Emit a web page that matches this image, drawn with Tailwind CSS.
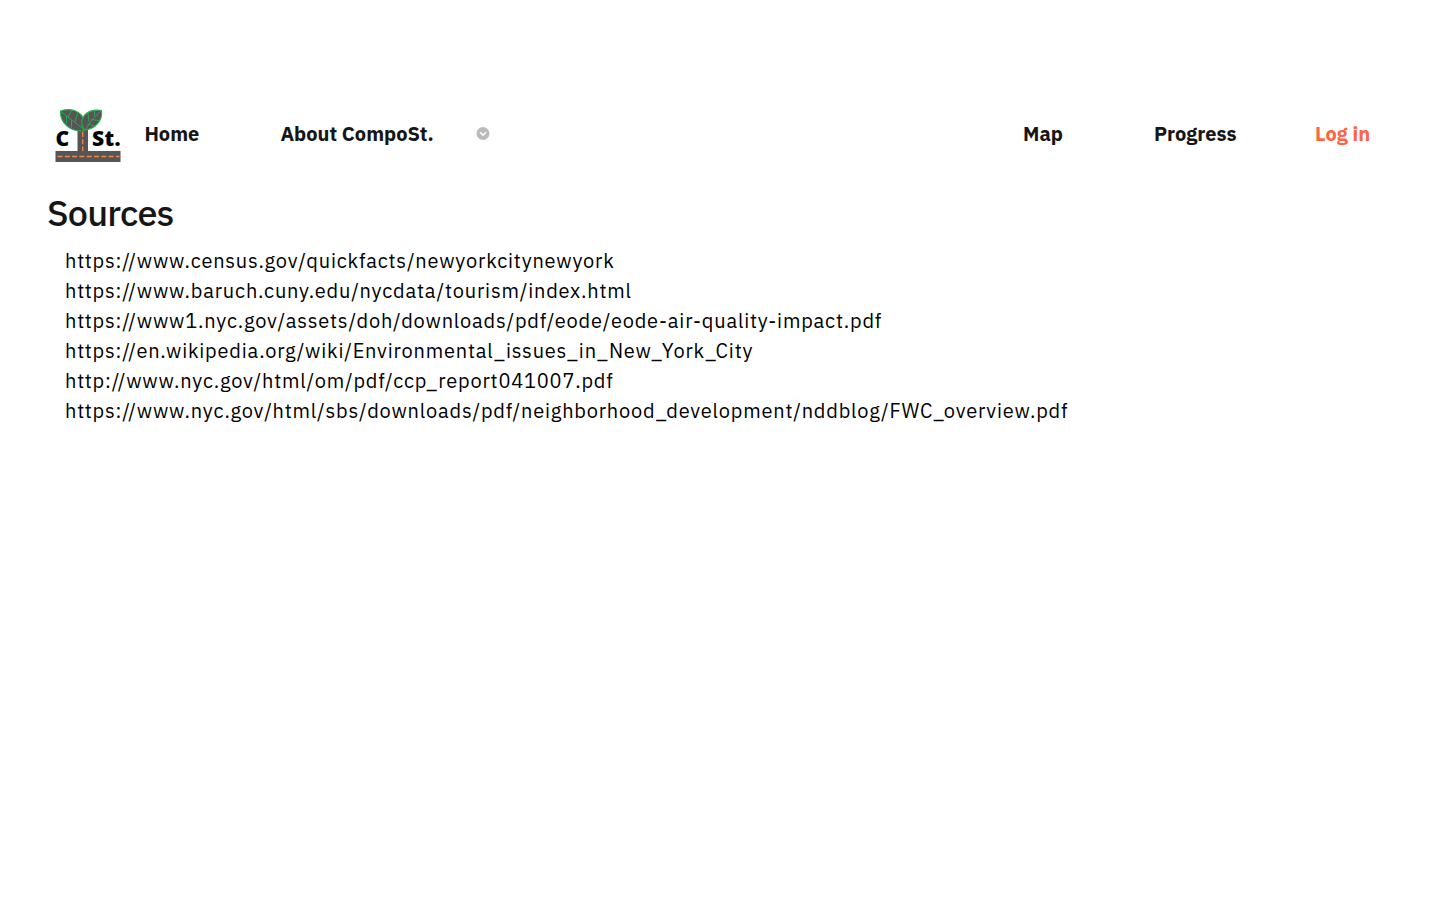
<!DOCTYPE html>
<html lang="en">
<head>
  <meta charset="UTF-8">
  <meta name="viewport" content="width=device-width, initial-scale=1.0">
  <title>CompoSt. - Sources</title>
  <script src="https://cdn.jsdelivr.net/npm/@tailwindcss/browser@4"></script>
</head>
<body class="bg-white text-[#161616] font-['IBM_Plex_Sans',Roboto,sans-serif] antialiased min-h-screen pt-[102px]">
  <nav class="flex items-center h-16 pl-12 pr-[70px] text-xl font-bold whitespace-nowrap">
    <a href="/" class="w-[96.4px] shrink-0">
      <svg class="w-20 h-16" viewBox="0 0 80 64">
        <path d="M29.500 24h10.500v26H29.500zM7.500 49h65v11h-65z" fill="#555555" />
        <path d="M34.700 30v19M9.500 54.500h62" fill="none" stroke="#f4864a" stroke-width="1.300" stroke-dasharray="5 2.300" />
        <path d="M12.500 9C23 5.500 34 9 36 19l2.500 7-3.500 3C23 29.500 12 22 12.500 9z" fill="#555555" stroke="#25b04f" stroke-width="1.100" />
        <path d="M53.500 8.500C42 6.500 32 13 34 23l2 5C47 27 55 19 53.500 8.500z" fill="#555555" stroke="#25b04f" stroke-width="1.100" />
        <path d="M13 9.500Q22 17 37 28Q44 16 53 9M18.500 14v7M23.500 17.500l0 8M20 15l4-7M27 20l3-10M43 17.500l8 1M39.500 22.500l8 1.500M46.500 14V8.500M41 20l-1-9" fill="none" stroke="#25b04f" stroke-width=".9" />
        <text x="7.500" y="44" font-family="Open Sans, sans-serif" font-size="21" font-weight="800" fill="#000">C</text>
        <text x="44" y="44" font-family="Open Sans, sans-serif" font-size="21" font-weight="800" fill="#000" textLength="28.500">St.</text>
      </svg>
    </a>
    <a href="/" class="w-[136px]">Home</a>
    <a href="/about" class="w-[195.600px]">About CompoSt.</a>
    <svg class="w-3.5 h-3.5 shrink-0" viewBox="0 0 14 14">
      <circle cx="7" cy="6.500" r="6.500" fill="#bbbbbb" />
      <path d="M4 5.200l3 3 3-3" fill="none" stroke="#fff" stroke-width="1.600" />
    </svg>
    <a href="/map" class="ml-auto w-[131px]">Map</a>
    <a href="/progress" class="w-[161px]">Progress</a>
    <a href="/login" class="w-[55px] text-[#ff6542]">Log in</a>
  </nav>

  <main>
    <h1 class="mt-[23px] ml-[47px] text-4xl leading-12 font-medium tracking-[-0.8px]">Sources</h1>
    <ul class="mt-[9px] ml-[65px] text-xl leading-[30px] tracking-[0.8px] text-black whitespace-nowrap">
      <li>https://www.census.gov/quickfacts/newyorkcitynewyork</li>
      <li>https://www.baruch.cuny.edu/nycdata/tourism/index.html</li>
      <li>https://www1.nyc.gov/assets/doh/downloads/pdf/eode/eode-air-quality-impact.pdf</li>
      <li>https://en.wikipedia.org/wiki/Environmental_issues_in_New_York_City</li>
      <li>http://www.nyc.gov/html/om/pdf/ccp_report041007.pdf</li>
      <li>https://www.nyc.gov/html/sbs/downloads/pdf/neighborhood_development/nddblog/FWC_overview.pdf</li>
    </ul>
  </main>
</body>
</html>
